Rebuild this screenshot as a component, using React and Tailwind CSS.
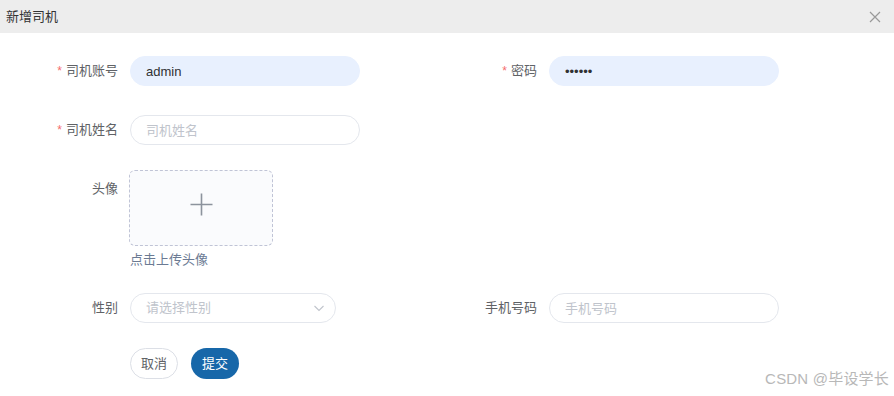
import { useState } from 'react';

// "新增司机" dialog — driver create form

const font = { fontFamily: '"Liberation Sans", "Noto Sans CJK SC", sans-serif' };

function Label({ required, children }) {
  return (
    <div className="w-[130px] shrink-0 pr-3 flex items-center justify-end text-[13px] text-[#606266]">
      {required && <span className="text-[#f56c6c] mr-1 text-[12px]">*</span>}
      {children}
    </div>
  );
}

function Input({ value, placeholder, filled, type = 'text', width = 'w-[230px]' }) {
  return (
    <input
      readOnly
      type={type}
      value={value || ''}
      placeholder={placeholder}
      className={`${width} h-[30px] rounded-full px-[15px] text-[13px] text-[#303133] placeholder:text-[#c0c4cc] outline-none ${
        filled ? 'bg-[#e8f0fe] border border-[#e8f0fe]' : 'bg-white border border-[#e4e7ed]'
      }`}
      style={font}
    />
  );
}

export default function App() {
  const [sex] = useState('');

  return (
    <div className="relative w-[894px] h-[396px] bg-white overflow-hidden" style={font}>
      {/* Header */}
      <div className="h-[33px] bg-[#ededed] flex items-center justify-between pl-[6px] pr-[13px]">
        <span className="text-[13px] text-[#333]">新增司机</span>
        <svg width="12" height="12" viewBox="0 0 12 12" className="text-[#999]">
          <path d="M1 1 L11 11 M11 1 L1 11" stroke="currentColor" strokeWidth="1.2" fill="none" />
        </svg>
      </div>

      <div className="pt-[23px]">
        {/* account / password */}
        <div className="flex h-[30px] mb-[29px]">
          <div className="flex w-[419px]">
            <Label required>司机账号</Label>
            <Input value="admin" filled />
          </div>
          <div className="flex">
            <Label required>密码</Label>
            <Input value="ssssss" type="password" filled />
          </div>
        </div>

        {/* name */}
        <div className="flex h-[30px] mb-[25px]">
          <Label required>司机姓名</Label>
          <Input placeholder="司机姓名" />
        </div>

        {/* avatar */}
        <div className="flex mb-[23px]">
          <div className="w-[130px] shrink-0 pr-3 pt-[11px] flex justify-end text-[13px] leading-[16px] text-[#606266] self-start">
            头像
          </div>
          <div>
            <div className="w-[144px] h-[76px] -ml-px border border-dashed border-[#c0c4d6] rounded-md bg-[#fafbfd] flex justify-center pt-[22px]">
              <svg width="23" height="23" viewBox="0 0 23 23">
                <path d="M11.5 0.5 V22.5 M0.5 11.5 H22.5" stroke="#8c939d" strokeWidth="1.6" fill="none" />
              </svg>
            </div>
            <div className="mt-[4px] h-5 leading-5 text-[13px] text-[#6b7a93]">点击上传头像</div>
          </div>
        </div>

        {/* sex / phone */}
        <div className="flex h-[30px] mb-[25px]">
          <div className="flex w-[419px]">
            <Label>性别</Label>
            <div className="relative w-[206px] h-[30px] rounded-full border border-[#e4e7ed] bg-white flex items-center px-[15px] text-[13px] text-[#c0c4cc]">
              {sex || '请选择性别'}
              <svg width="12" height="12" viewBox="0 0 12 12" className="absolute right-[10px] top-[8px]">
                <path d="M1.5 4 L6 8.5 L10.5 4" stroke="#c0c4cc" strokeWidth="1.1" fill="none" />
              </svg>
            </div>
          </div>
          <div className="flex">
            <Label>手机号码</Label>
            <Input placeholder="手机号码" />
          </div>
        </div>

        {/* actions */}
        <div className="flex pl-[130px] gap-[13px]">
          <button className="h-[31px] w-12 rounded-full border border-[#dcdfe6] bg-white text-[13px] text-[#606266]">取消</button>
          <button className="h-[31px] w-12 rounded-full bg-[#1767a9] text-[13px] text-white">提交</button>
        </div>
      </div>

      {/* watermark */}
      <div className="absolute right-[5px] bottom-[6px] text-[15px] text-[#b8b8b8] tracking-[0.2px]">CSDN @毕设学长</div>
    </div>
  );
}
